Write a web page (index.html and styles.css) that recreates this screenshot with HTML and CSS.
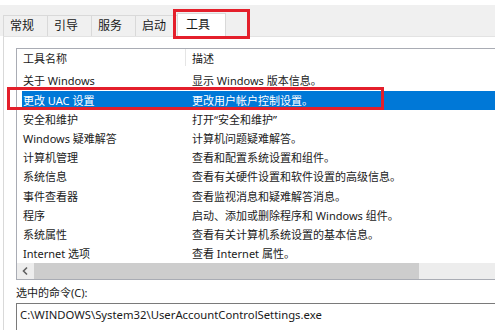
FILE: index.html
```html
<!DOCTYPE html>
<html lang="zh-CN">
  <head>
    <meta charset="UTF-8" />
    <title>系统配置 - 工具</title>
    <link rel="stylesheet" href="styles.css">
  </head>
  <body>
    <div class="dialog">
      <div class="tabbar">
        <div class="tab">常规</div>
        <div class="tab">引导</div>
        <div class="tab">服务</div>
        <div class="tab">启动</div>
        <div class="tab active">工具</div>
      </div>

      <div class="panel">
        <div class="listbox">
          <div class="list-head">
            <div class="col-name">工具名称</div>
            <div class="col-sep"></div>
            <div class="col-desc">描述</div>
          </div>
          <div class="row"><div class="col-name">关于 Windows</div><div class="col-desc">显示 Windows 版本信息。</div></div>
          <div class="row selected"><div class="col-name">更改 UAC 设置</div><div class="col-desc">更改用户帐户控制设置。</div></div>
          <div class="row"><div class="col-name">安全和维护</div><div class="col-desc">打开“安全和维护”</div></div>
          <div class="row"><div class="col-name">Windows 疑难解答</div><div class="col-desc">计算机问题疑难解答。</div></div>
          <div class="row"><div class="col-name">计算机管理</div><div class="col-desc">查看和配置系统设置和组件。</div></div>
          <div class="row"><div class="col-name">系统信息</div><div class="col-desc">查看有关硬件设置和软件设置的高级信息。</div></div>
          <div class="row"><div class="col-name">事件查看器</div><div class="col-desc">查看监视消息和疑难解答消息。</div></div>
          <div class="row"><div class="col-name">程序</div><div class="col-desc">启动、添加或删除程序和 Windows 组件。</div></div>
          <div class="row"><div class="col-name">系统属性</div><div class="col-desc">查看有关计算机系统设置的基本信息。</div></div>
          <div class="row"><div class="col-name">Internet 选项</div><div class="col-desc">查看 Internet 属性。</div></div>
          <div class="hscroll">
            <div class="scroll-btn">
              <svg width="17" height="16" viewBox="0 0 17 16">
                <polyline points="10,4.5 6.5,8 10,11.5" fill="none" stroke="#606060" stroke-width="1.6" />
              </svg>
            </div>
            <div class="scroll-thumb"></div>
          </div>
        </div>

        <div class="cmd-label">选中的命令(C):</div>
        <div class="cmd-box">C:\WINDOWS\System32\UserAccountControlSettings.exe</div>
      </div>
    </div>

    <div class="mark mark-tab"></div>
    <div class="mark mark-row"></div>
  </body>
</html>
```

FILE: styles.css
```css
* {
  margin: 0;
  padding: 0;
  box-sizing: border-box;
}
body {
  font-family: "Noto Sans", "Noto Sans CJK SC", sans-serif;
  font-size: 11px;
  color: #1a1a1a;
  background: #fff;
  width: 495px;
  height: 330px;
  overflow: hidden;
  position: relative;
}
.dialog {
  padding-top: 5px;
}
.tabbar {
  height: 31px;
  background: #f0f0f0;
  display: flex;
  align-items: flex-end;
  padding-left: 3px;
}
.tab {
  width: 44px;
  height: 21px;
  padding-left: 6px;
  font-size: 12px;
  line-height: 20px;
  border: 1px solid #d9d9d9;
  border-bottom: none;
  border-right: none;
  background: #f0f0f0;
}
.tab.active {
  width: 49px;
  height: 23px;
  margin-left: -2px;
  padding-left: 8px;
  line-height: 22px;
  background: #fff;
  border-right: 1px solid #d9d9d9;
  position: relative;
  z-index: 1;
}
.panel {
  margin-left: 3px;
  border-left: 1px solid #d9d9d9;
  border-top: 1px solid #e3e3e3;
  padding: 11px 0 0 12px;
  height: 294px;
}
.listbox {
  border: 1px solid #a9acb4;
  border-right: none;
  overflow: hidden;
}
.list-head {
  display: flex;
  height: 22.4px;
  padding-left: 5px;
  line-height: 20px;
}
.col-name {
  flex: 0 0 163px;
  padding-left: 1px;
  white-space: nowrap;
}
.col-sep {
  width: 1px;
  height: 17px;
  background: #e5e5e5;
}
.list-head .col-desc {
  padding-left: 6px;
}
.row {
  display: flex;
  height: 19.2px;
  line-height: 19px;
  margin-left: 5px;
  white-space: nowrap;
}
.row .col-desc {
  padding-left: 7px;
}
.row.selected {
  background: #0078d7;
  color: #fff;
}
.hscroll {
  display: flex;
  height: 16px;
  background: #ededed;
}
.scroll-btn {
  width: 17px;
  height: 16px;
}
.scroll-thumb {
  width: 385px;
  background: #cdcdcd;
}
.cmd-label {
  margin-top: 5px;
  line-height: 16px;
}
.cmd-box {
  margin-top: 2px;
  border: 1px solid #7a7a7a;
  border-right: none;
  height: 40px;
  padding: 2px 0 0 3px;
  font-size: 11.3px;
  line-height: 18px;
  white-space: nowrap;
  overflow: hidden;
}
.mark {
  position: absolute;
  border: 3px solid #e41f2b;
}
.mark-tab {
  left: 173px;
  top: 9px;
  width: 77px;
  height: 30px;
}
.mark-row {
  left: 7px;
  top: 87px;
  width: 377px;
  height: 22.5px;
}
```
